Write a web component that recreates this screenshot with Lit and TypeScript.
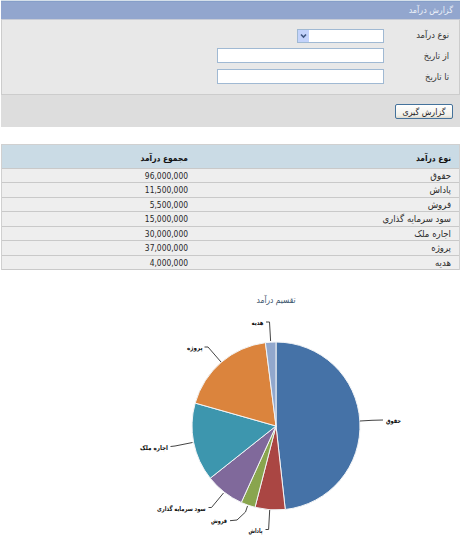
import { LitElement, html, svg, css } from "lit";
import { customElement } from "lit/decorators.js";

interface Slice {
  name: string;
  amount: number;
  color: string;
  line: string;
  x: number;
  y: number;
  width: number;
}

const slices: Slice[] = [
  { name: "حقوق", amount: 96000000, color: "#4572a7", line: "360,421 372,420.3 383,420", x: 401, y: 423, width: 15 },
  { name: "پاداش", amount: 11500000, color: "#aa4643", line: "269.7,510 268.6,529.5 265.5,529.5", x: 262.5, y: 533, width: 14 },
  { name: "فروش", amount: 5500000, color: "#89a54e", line: "247.5,506 245.5,512 237,520 230,520.7", x: 227, y: 523, width: 16 },
  { name: "سود سرمایه گذاری", amount: 15000000, color: "#80699b", line: "223.5,493 211.5,507.5 208.5,507.5", x: 205.5, y: 511, width: 48.5 },
  { name: "اجاره ملک", amount: 30000000, color: "#3d96ae", line: "192.5,442.5 175,446 170.5,446.5", x: 168, y: 449.5, width: 28 },
  { name: "پروژه", amount: 37000000, color: "#db843d", line: "221,362 208,347 204.5,347", x: 202.5, y: 350, width: 15.5 },
  { name: "هدیه", amount: 4000000, color: "#92a8cd", line: "270.6,341 269.5,322 266,322", x: 263.5, y: 325, width: 12 },
];

@customElement("income-chart")
export class IncomeChart extends LitElement {
  static styles = css`
    :host { display: block; }
    .chart { display: block; direction: rtl; }
    .title { font: 9px "DejaVu Sans Condensed", "DejaVu Sans", sans-serif; fill: #3e576f; }
    .label { font: bold 6.5px "DejaVu Sans", sans-serif; fill: #111; }
    .line { fill: none; stroke: #444; stroke-width: 1; }
    .slice { stroke: #f2f4f6; stroke-width: 1; stroke-linejoin: round; }
  `;

  private sectors() {
    const total = slices.reduce((sum, s) => sum + s.amount, 0);
    const point = (part: number) => {
      const a = (part / total) * Math.PI * 2;
      return `${276 + 84 * Math.sin(a)} ${426 - 84 * Math.cos(a)}`;
    };
    let start = 0;
    return slices.map((s) => {
      const end = start + s.amount;
      const d = `M276 426L${point(start)}A84 84 0 0 1 ${point(end)}Z`;
      start = end;
      return svg`<path class="slice" fill=${s.color} d=${d}></path>`;
    });
  }

  render() {
    return html`<svg class="chart" width="460" height="269" viewBox="0 270 460 269">
      <text class="title" x="295.5" y="303" textLength="39" lengthAdjust="spacingAndGlyphs">تقسیم درآمد</text>
      ${this.sectors()}
      ${slices.map((s) => svg`<polyline class="line" points=${s.line}></polyline>
        <text class="label" x=${s.x} y=${s.y} textLength=${s.width} lengthAdjust="spacingAndGlyphs">${s.name}</text>`)}
    </svg>`;
  }
}

@customElement("app-root")
export class AppRoot extends LitElement {
  static styles = css`
    :host {
      display: block;
      width: 460px;
      height: 539px;
      overflow: hidden;
      background: #fff;
      direction: rtl;
      color: #333;
      font: 9px "DejaVu Sans Condensed", "DejaVu Sans", sans-serif;
    }
    * { box-sizing: border-box; }
    .panel { height: 127px; margin-left: 1px; border-top: 1px solid #d5e0ea; background: #ddd; }
    .heading {
      height: 18px; padding-right: 7px; line-height: 17px; font-size: 8.8px;
      background: #92a6ce; color: #edf2fa; border-top: 1px solid #869fc9;
    }
    .fields {
      height: 76px; padding: 9px 10px 0 0; background: #e8e8e8;
      border: 1px solid #ccc; border-top-color: #c8ccd6;
      display: flex; flex-direction: column;
    }
    .field { display: flex; height: 21px; align-items: flex-start; }
    .field:first-child { height: 19px; }
    .caption { width: 65px; line-height: 15px; font-size: 9.2px; }
    .field:first-child .caption { line-height: 12px; }
    .box { width: 167px; height: 15px; background: #fff; border: 1px solid #a0b9d3; }
    .select { width: 87px; height: 14px; display: flex; justify-content: flex-end; }
    .arrow { width: 11px; height: 12px; background: #c3d3fb; }
    .arrow svg { display: block; }
    .actions { height: 32px; padding: 9px 7px 0 0; }
    .button {
      display: block; width: 58px; height: 15px; padding: 0; border: 1px solid #44729b; border-radius: 2px;
      background: linear-gradient(#fff, #f0f0ea 80%, #ddd9cd); color: #222;
      font: 8.8px/12px "DejaVu Sans Condensed", "DejaVu Sans", sans-serif; white-space: nowrap;
    }
    .table { margin: 17px 0 0 1px; border: 1px solid #d0d0d0; border-bottom: 0; background: #eee; }
    .row { display: grid; grid-template-columns: 263px 1fr; height: 14.43px; padding-right: 8px; border-bottom: 1px solid #c9c9c9; line-height: 14px; font-size: 9.5px; color: #2a2a2a; }
    .row.head { height: 24px; background: #cadbe5; line-height: 26px; font-weight: bold; font-size: 8.4px; color: #111; }
    .number { direction: ltr; unicode-bidi: isolate; justify-self: start; font-size: 8.4px; }
  `;

  render() {
    return html`
      <section class="panel">
        <div class="heading">گزارش درآمد</div>
        <div class="fields">
          <div class="field">
            <span class="caption">نوع درآمد</span>
            <div class="box select">
              <div class="arrow"><svg width="11" height="12" viewBox="0 0 11 12"><path d="M3 4.5L5.5 7L8 4.5" fill="none" stroke="#405780" stroke-width="1.6"></path></svg></div>
            </div>
          </div>
          <div class="field"><span class="caption">از تاریخ</span><div class="box"></div></div>
          <div class="field"><span class="caption">تا تاریخ</span><div class="box"></div></div>
        </div>
        <div class="actions"><button class="button">گزارش گیری</button></div>
      </section>
      <section class="table">
        <div class="row head"><span>نوع درآمد</span><span>مجموع درآمد</span></div>
        ${slices.map((s) => html`<div class="row"><span>${s.name}</span><span class="number">${s.amount.toLocaleString("en-US")}</span></div>`)}
      </section>
      <income-chart></income-chart>
    `;
  }
}
